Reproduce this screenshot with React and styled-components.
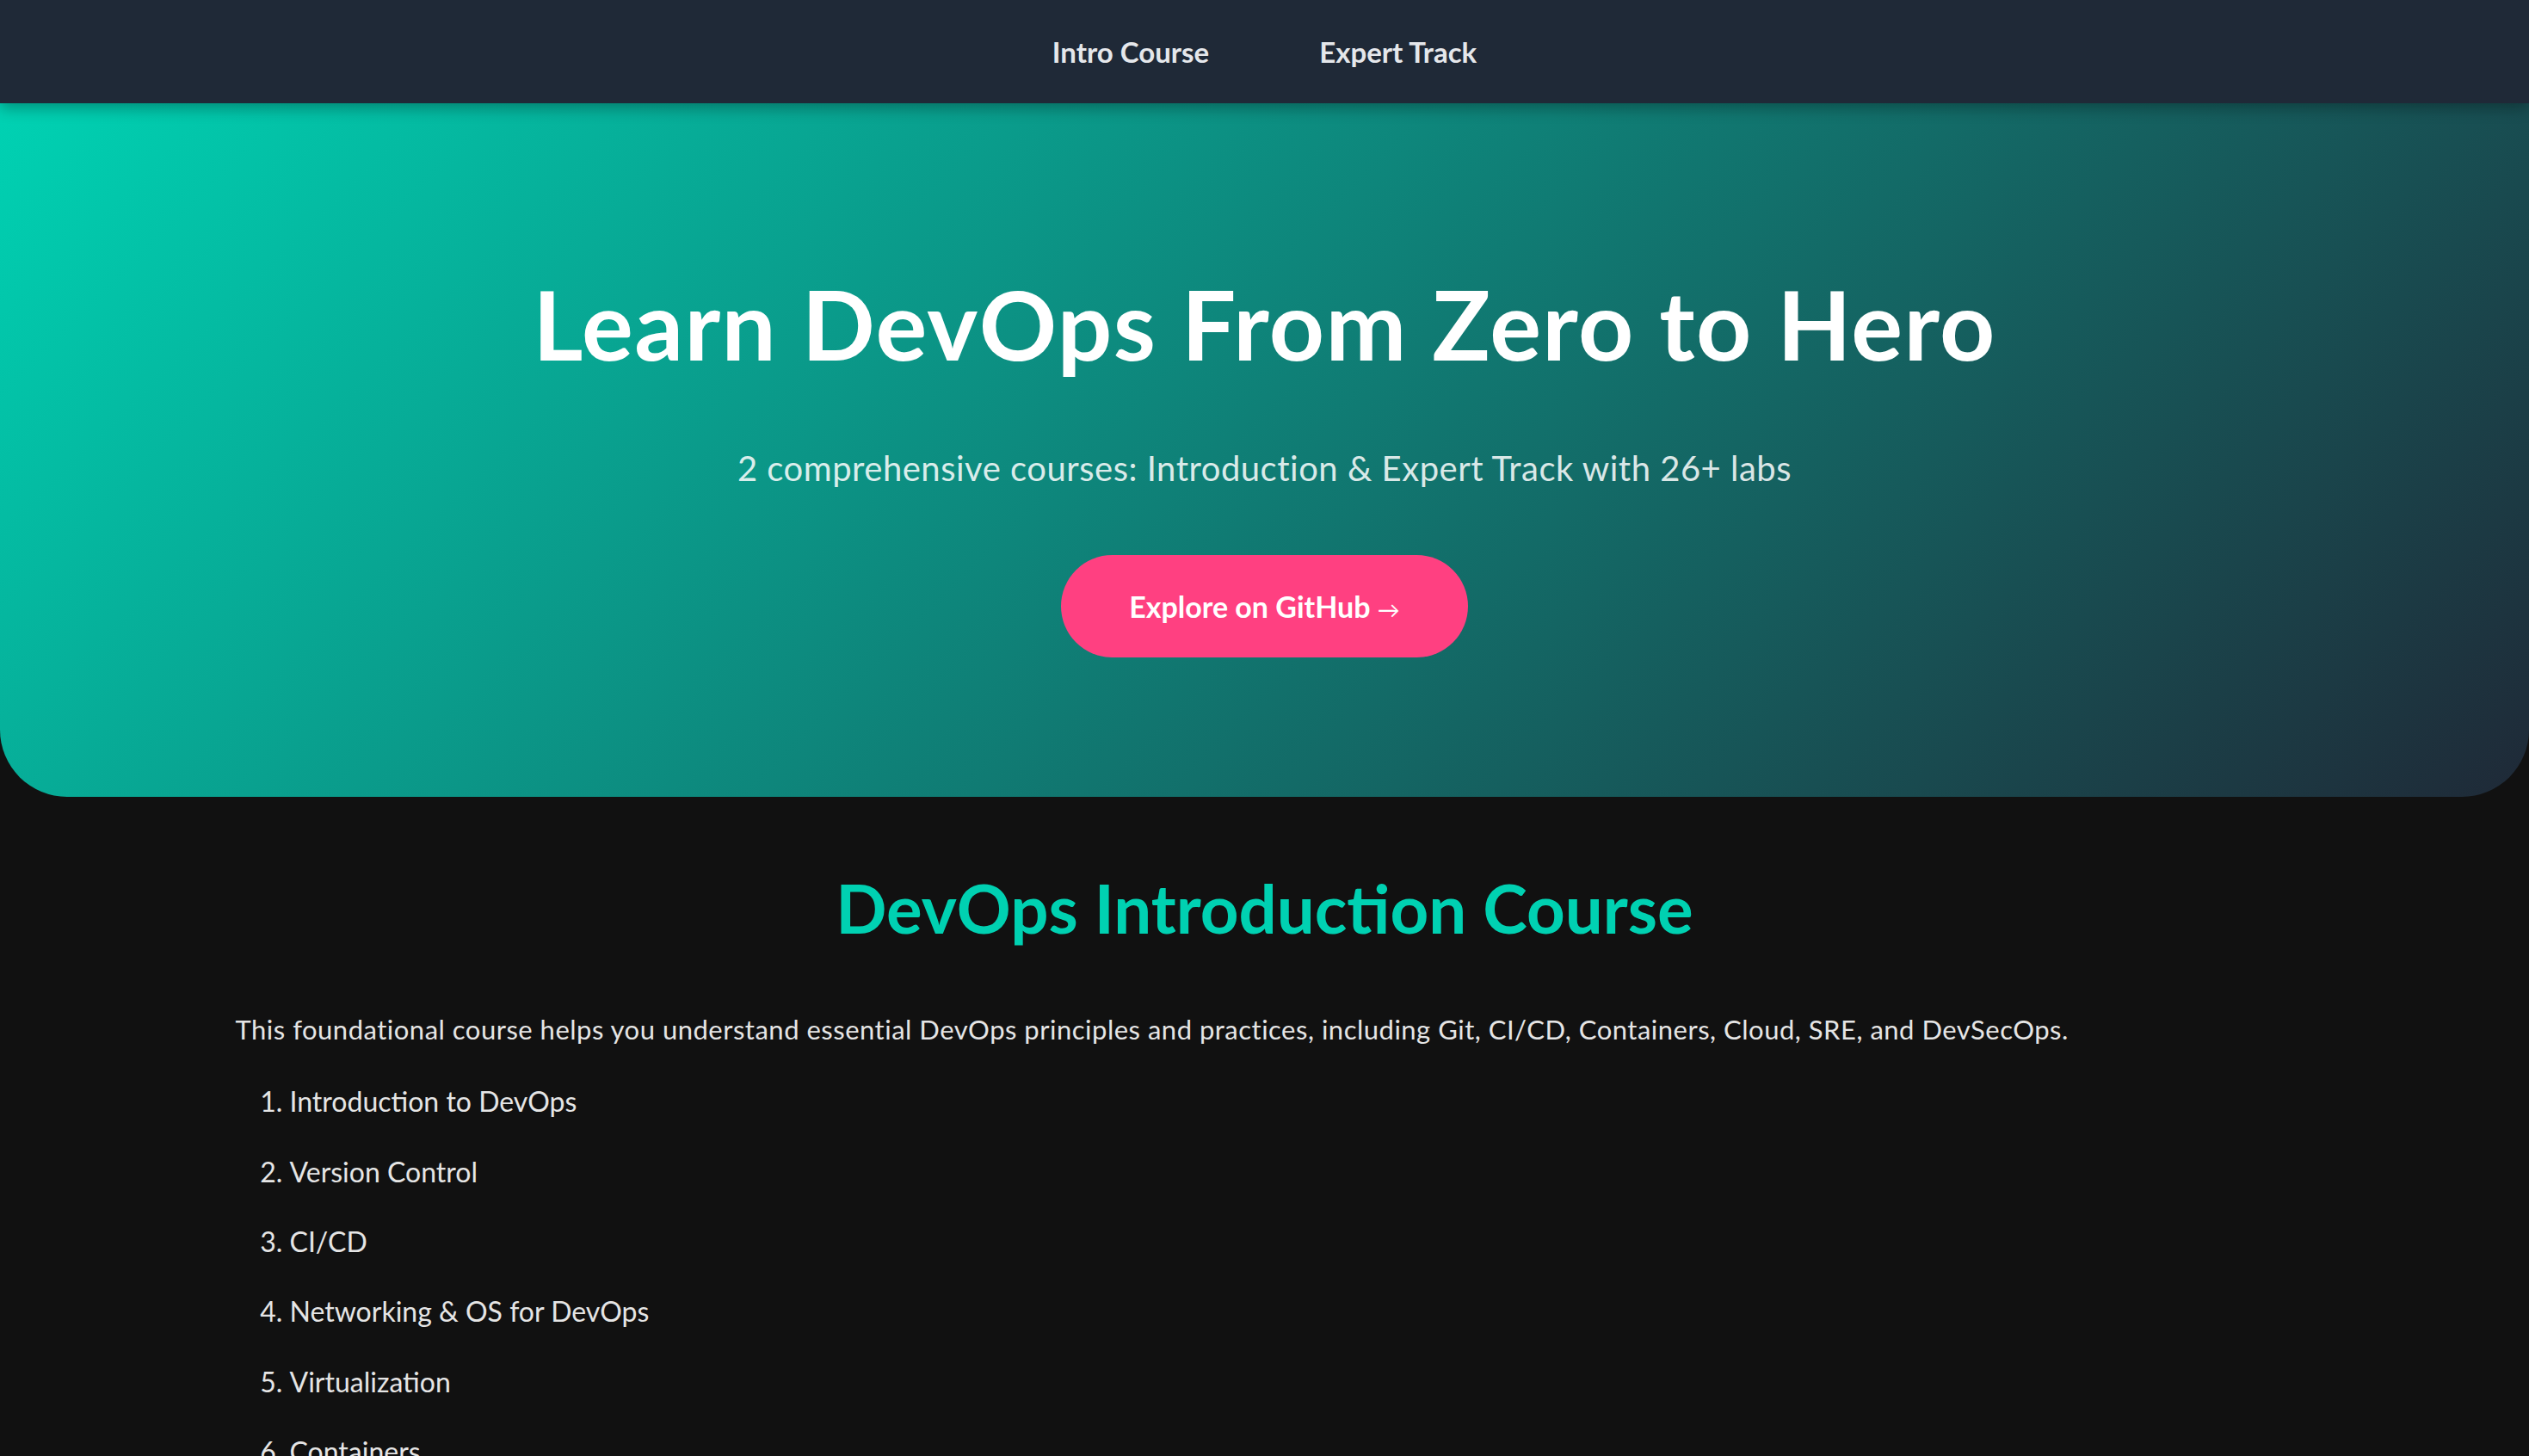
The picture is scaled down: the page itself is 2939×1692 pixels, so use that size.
import React from "react";
import styled, { createGlobalStyle } from "styled-components";

const GlobalStyle = createGlobalStyle`
  * { box-sizing: border-box; }
  body {
    margin: 0;
    background: #111111;
    font-family: Lato, "Open Sans", sans-serif;
    color: #e5e5e5;
  }
`;

const modules = [
  "Introduction to DevOps",
  "Version Control",
  "CI/CD",
  "Networking & OS for DevOps",
  "Virtualization",
  "Containers",
  "Cloud Computing",
  "Site Reliability Engineering",
  "DevSecOps",
];

function App() {
  return (
    <>
      <GlobalStyle />
      <NavBar>
        <NavLink href="#intro">Intro Course</NavLink>
        <NavLink href="#expert">Expert Track</NavLink>
      </NavBar>
      <Hero>
        <HeroTitle>Learn DevOps From Zero to Hero</HeroTitle>
        <HeroSubtitle>
          2 comprehensive courses: Introduction &amp; Expert Track with 26+ labs
        </HeroSubtitle>
        <CtaButton href="#github">
          Explore on GitHub <Arrow>→</Arrow>
        </CtaButton>
      </Hero>
      <Section id="intro">
        <SectionTitle>DevOps Introduction Course</SectionTitle>
        <Paragraph>
          This foundational course helps you understand essential DevOps
          principles and practices, including Git, CI/CD, Containers, Cloud,
          SRE, and DevSecOps.
        </Paragraph>
        <ModuleList>
          {modules.map((m) => (
            <ModuleItem key={m}>{m}</ModuleItem>
          ))}
        </ModuleList>
      </Section>
    </>
  );
}

export default App;

const NavBar = styled.nav`
  position: relative;
  z-index: 2;
  height: 120px;
  display: flex;
  align-items: center;
  justify-content: center;
  gap: 128px;
  background: #1f2937;
  box-shadow: 0 6px 16px rgba(0, 0, 0, 0.3);
`;

const NavLink = styled.a`
  color: #e5e7eb;
  text-decoration: none;
  font-size: 33px;
  font-weight: 700;
`;

const Hero = styled.header`
  display: flex;
  flex-direction: column;
  align-items: center;
  padding: 189px 40px 162px;
  background: linear-gradient(135deg, #00d2b3 0%, #1f2937 100%);
  border-radius: 0 0 78px 78px;
  text-align: center;
`;

const HeroTitle = styled.h1`
  margin: 0;
  font-size: 112px;
  line-height: 1.2;
  font-weight: 700;
  letter-spacing: 1.4px;
  color: #ffffff;
`;

const HeroSubtitle = styled.p`
  margin: 71px 0 0;
  font-size: 40px;
  line-height: 1.5;
  font-weight: 400;
  letter-spacing: 0.5px;
  color: rgba(255, 255, 255, 0.86);
`;

const CtaButton = styled.a`
  margin-top: 71px;
  display: inline-block;
  padding: 34px 79px;
  border-radius: 60px;
  background: #ff4081;
  color: #ffffff;
  font-size: 34px;
  line-height: 1.5;
  font-weight: 700;
  text-decoration: none;
`;

const Arrow = styled.span`
  font-size: 26px;
  font-weight: 400;
`;

const Section = styled.section`
  max-width: 2392px;
  margin: 0 auto;
  padding: 83px 0 60px;
`;

const SectionTitle = styled.h2`
  margin: 0;
  text-align: center;
  font-size: 78px;
  line-height: 1.2;
  font-weight: 700;
  color: #00d1b2;
`;

const Paragraph = styled.p`
  margin: 69px 0 0;
  font-size: 31px;
  line-height: 1.55;
  letter-spacing: 0.5px;
  color: #e5e5e5;
`;

const ModuleList = styled.ol`
  margin: 34px 0 0;
  padding-left: 63px;
`;

const ModuleItem = styled.li`
  font-size: 32px;
  line-height: 1.65;
  margin-bottom: 28.7px;
  color: #e5e5e5;
`;
